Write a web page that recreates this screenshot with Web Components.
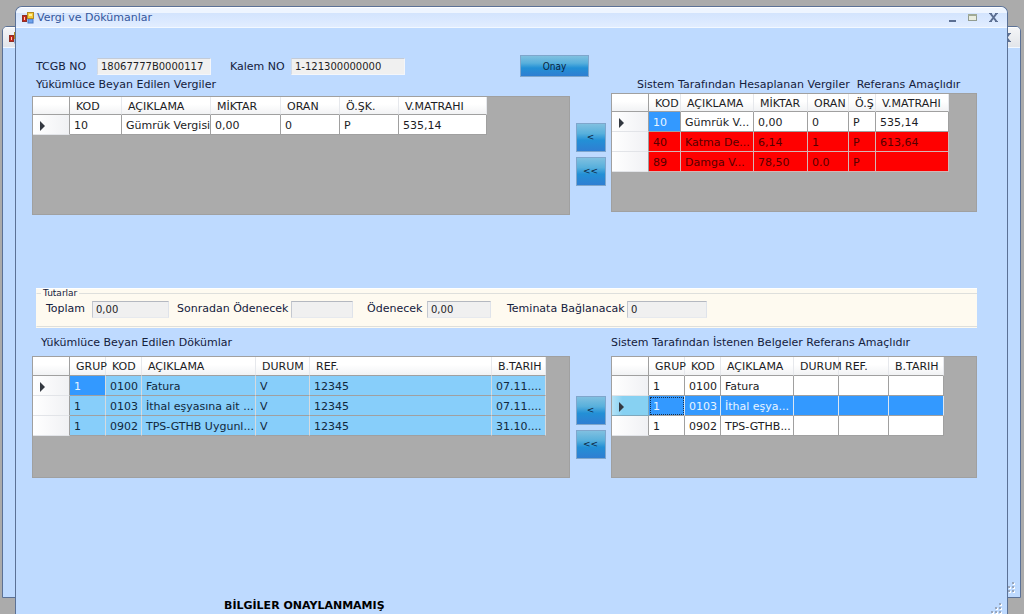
<!DOCTYPE html>
<html lang="tr">
<head>
<meta charset="utf-8">
<title>Vergi ve Dökümanlar</title>
<style>
  html, body { margin: 0; height: 100%; }
  body { background: #ababab; overflow: hidden; font: 11px/15px "DejaVu Sans", Verdana, sans-serif; color: #14203c; }
</style>
</head>
<body>
<tax-desktop></tax-desktop>

<template id="tpl-window">
  <style>
    :host { display: flex; flex-direction: column; box-sizing: border-box; border: 1px solid #5b7196; border-radius: 7px 7px 0 0; background: #bedaff; overflow: hidden; position: relative; }
    header { display: flex; align-items: center; height: 19px; padding: 0 8px 0 6px; border-top: 1px solid #fff; border-bottom: 1px solid #f2f8ff; background: linear-gradient(#eef5ff 0 25%, #d3e4fd 26%, #d9e8ff 60%, #e2edff); color: #35579c; }
    :host([inactive]) header { background: linear-gradient(#f4f5f7, #e2e5ea); }
    h1 { flex: 1; margin: 0 0 0 2px; font: inherit; }
    button { border: 0; padding: 0; margin: 0 0 0 10px; background: none; width: 11px; height: 11px; display: block; }
    svg { display: block; }
    .content { flex: 1; display: flex; flex-direction: column; }
    .grip { position: absolute; right: 4px; bottom: 0; }
    :host([inactive]) .grip { bottom: 4px; }
  </style>
  <header>
    <svg width="13" height="13" viewBox="0 0 13 13" aria-hidden="true">
      <rect x="6" y="8" width="5" height="4" fill="#6fa3ee" stroke="#4a78c4"/>
      <rect x=".5" y="4.500" width="4" height="6" fill="#c8281c" stroke="#8e3128"/>
      <rect x="2" y="6" width="1" height="3" fill="#ffc9b4"/>
      <rect x="5.500" y="1.500" width="6" height="6" fill="#f6cc3c" stroke="#b58b22"/>
      <rect x="7" y="3" width="3" height="2" fill="#fff0a0"/>
    </svg>
    <h1></h1>
    <button aria-label="Simge durumuna küçült"><svg width="11" height="11"><rect x="3" y="8" width="7" height="2" fill="#5c6f92"/></svg></button>
    <button aria-label="Ekranı kapla"><svg width="11" height="11"><rect x="1.500" y="2.500" width="8" height="6" fill="#e9eddf" stroke="#939c90"/><rect x="1" y="2" width="9" height="2" fill="#a0aa96"/></svg></button>
    <button aria-label="Kapat"><svg width="11" height="11"><path d="M2.500 1.500L8.500 9.500M8.500 1.500L2.500 9.500" fill="none" stroke="#5c6f92" stroke-width="2"/><path d="M1 1h3v1H1zM7 1h3v1H7zM1 9h3v1H1zM7 9h3v1H7z" fill="#5c6f92"/></svg></button>
  </header>
  <div class="content"><slot></slot></div>
  <svg class="grip" width="12" height="12" aria-hidden="true"><g fill="#fff"><path d="M9 2h2v2h-2zM9 6h2v2h-2zM5 6h2v2h-2zM9 10h2v2h-2zM5 10h2v2h-2zM1 10h2v2h-2z"/></g><g fill="#98a6bc"><path d="M8 1h2v2h-2zM8 5h2v2h-2zM4 5h2v2h-2zM8 9h2v2h-2zM4 9h2v2h-2zM0 9h2v2h-2z"/></g></svg>
</template>

<template id="tpl-desktop">
  <style>
    :host { display: block; position: relative; min-height: 100%; }
    .back { position: absolute; inset: 26px 3px 16px 2px; border-radius: 5px 5px 0 0; }
    .front { margin: 0 16px 0 15px; top: 6px; min-height: calc(100vh - 6px); border-bottom: 0; }
    .page { flex: 1; display: flex; flex-direction: column; padding: 27px 30px 0 16px; }
    .top { display: flex; align-items: center; padding-left: 4px; height: 22px; }
    .top blue-button { margin-left: 115px; }
    .top labeled-field + labeled-field { margin-left: 19px; }
    .pair { display: grid; grid-template-columns: minmax(0, 538fr) 41px minmax(0, 366fr); }
    .caption { margin: 0 0 4px 4px; font: inherit; white-space: pre; }
    .taxes .right .caption { margin: 0 0 1px 26px; }
    .docs .caption { margin: 0 0 6px 9px; }
    .docs .right .caption { margin-left: 0; }
    .move { display: flex; flex-direction: column; align-items: center; gap: 5px; padding-top: 46px; }
    .docs .move { padding-top: 61px; }
    .taxes data-grid { height: 119px; }
    .docs data-grid { height: 122px; }
    group-box { margin: 73px 0 7px 4px; }
    .status { margin: auto 0 1px 192px; font-weight: bold; color: #000; }
  </style>
  <app-window class="back" inactive></app-window>
  <app-window class="front" heading="Vergi ve Dökümanlar">
    <div class="page">
      <div class="top">
        <labeled-field label="TCGB NO" value="18067777B0000117" label-width="61" field-width="114" small></labeled-field>
        <labeled-field label="Kalem NO" value="1-121300000000" label-width="61" field-width="114" small></labeled-field>
        <blue-button wide>Onay</blue-button>
      </div>
      <section class="pair taxes">
        <div>
          <h2 class="caption">Yükümlüce Beyan Edilen Vergiler</h2>
          <data-grid source="declaredTaxes"></data-grid>
        </div>
        <div class="move"><blue-button>&lt;</blue-button><blue-button>&lt;&lt;</blue-button></div>
        <div class="right">
          <h2 class="caption">Sistem Tarafından Hesaplanan Vergiler  Referans Amaçlıdır</h2>
          <data-grid source="computedTaxes"></data-grid>
        </div>
      </section>
      <group-box legend="Tutarlar">
        <labeled-field label="Toplam" value="0,00" label-width="46" field-width="77"></labeled-field>
        <labeled-field label="Sonradan Ödenecek" value="" label-width="114" field-width="62"></labeled-field>
        <labeled-field label="Ödenecek" value="0,00" label-width="60" field-width="64"></labeled-field>
        <labeled-field label="Teminata Bağlanacak" value="0" label-width="120" field-width="80"></labeled-field>
      </group-box>
      <section class="pair docs">
        <div>
          <h2 class="caption">Yükümlüce Beyan Edilen Dökümlar</h2>
          <data-grid source="declaredDocs"></data-grid>
        </div>
        <div class="move"><blue-button>&lt;</blue-button><blue-button>&lt;&lt;</blue-button></div>
        <div class="right">
          <h2 class="caption">Sistem Tarafından İstenen Belgeler Referans Amaçlıdır</h2>
          <data-grid source="requestedDocs"></data-grid>
        </div>
      </section>
      <div class="status">BİLGİLER ONAYLANMAMIŞ</div>
    </div>
  </app-window>
</template>

<template id="tpl-field">
  <style>
    :host { display: flex; align-items: center; }
    label { flex: none; white-space: nowrap; }
    input { box-sizing: border-box; height: 17px; margin: 0; padding: 0 3px; border: 1px solid; border-color: #b4b8c0 #dfe3ea #e6e9ee #c4c8d0; background: #f0f0f0; font: 10px/15px "DejaVu Sans", Verdana, sans-serif; color: #1e1e24; outline: 0; }
    :host([small]) input { border-color: #c3cbd8 #f4f6fa #f4f6fa #d2dae6; }
    :host(:not([small])) input { margin-top: 2px; }
  </style>
  <label for="f"></label><input id="f" type="text" readonly>
</template>

<template id="tpl-button">
  <style>
    :host { display: block; }
    button { display: block; box-sizing: border-box; width: 30px; height: 29px; padding: 0; border: 1px solid #7fa6cc; background: linear-gradient(#80c0e0, #58b0dc 35%, #2390d6 60%, #2f7ed2); font: 9px/15px "DejaVu Sans", Verdana, sans-serif; color: #0c2440; }
    :host([wide]) button { width: 69px; height: 22px; font: 10px/15px "DejaVu Sans Condensed", "DejaVu Sans", sans-serif; }
  </style>
  <button type="button"><slot></slot></button>
</template>

<template id="tpl-group">
  <style>
    :host { display: block; background: #fefaf0; border-top: 1px solid #fff; padding-bottom: 1px; }
    fieldset { margin: 0; min-width: 0; padding: 1px 0 9px 9px; border: 1px solid #dedfdc; border-left-color: #fefaf0; border-right: 0; }
    legend { margin-left: -5px; padding: 0 2px; font-size: 9px; line-height: 9px; }
    .row { display: flex; gap: 14px; align-items: center; height: 18px; }
    ::slotted(:first-child) { margin-right: -6px; }
    ::slotted(:last-child) { margin-left: 2px; }
  </style>
  <fieldset><legend></legend><div class="row"><slot></slot></div></fieldset>
</template>

<template id="tpl-grid">
  <style>
    :host { display: block; box-sizing: border-box; border: 1px solid #a0a0a0; background: #ababab; overflow: hidden; }
    table { table-layout: fixed; border-collapse: separate; border-spacing: 0; }
    th, td { box-sizing: border-box; padding: 2px 0 0 4px; height: 20px; white-space: nowrap; text-align: left; font-weight: normal; color: #1c1c24; border: solid #a0a0a0; border-width: 0 1px 1px 0; line-height: 15px; }
    td { background: #fff; overflow: hidden; }
    thead tr { background: linear-gradient(#fff 0 40%, #f0f1f3); }
    thead th { height: 18px; padding: 1px 0 0 6px; border-right-color: #e6e8ec; }
    :host([source$="Docs"]) thead th { height: 19px; }
    thead th:first-child { border-right-color: #a0a0a0; }
    tbody th { background: linear-gradient(90deg, #fff, #f0f1f4); border-bottom-color: #e2e4e8; }
    th svg { display: block; margin-left: 3px; }
    tr.red td { background: #f00; color: #560000; border-color: #d5b4b4; }
    tr.blue td { background: #87cefa; color: #12283c; border-right-color: #d6dade; }
    tr.chosen td { background: #3399ff; color: #e8f4ff; border-right-color: #dbe6f2; }
    tr.chosen th { background: linear-gradient(90deg, #b4e2f6, #87d1f2 30%); border-color: #7fa8bc; }
    tr td.current { background: #3399ff; color: #e8f4ff; }
    tr.chosen td.current { outline: 1px dotted #14304c; outline-offset: -2px; }
  </style>
  <table><colgroup></colgroup><thead><tr></tr></thead><tbody></tbody></table>
</template>

<script>
const grids = {
  declaredTaxes: {
    columns: [['', 37], ['KOD', 52], ['AÇIKLAMA', 89], ['MİKTAR', 70], ['ORAN', 59], ['Ö.ŞK.', 59], ['V.MATRAHI', 88]],
    rows: [{ pointer: true, cells: ['10', 'Gümrük Vergisi', '0,00', '0', 'P', '535,14'] }]
  },
  computedTaxes: {
    columns: [['', 37], ['KOD', 32], ['AÇIKLAMA', 73], ['MİKTAR', 54], ['ORAN', 41], ['Ö.Ş', 27], ['V.MATRAHI', 73]],
    rows: [
      { pointer: true, current: true, cells: ['10', 'Gümrük V...', '0,00', '0', 'P', '535,14'] },
      { tone: 'red', cells: ['40', 'Katma De...', '6,14', '1', 'P', '613,64'] },
      { tone: 'red', cells: ['89', 'Damga V...', '78,50', '0.0', 'P', ''] }
    ]
  },
  declaredDocs: {
    columns: [['', 37], ['GRUP', 36], ['KOD', 36], ['AÇIKLAMA', 114], ['DURUM', 54], ['REF.', 182], ['B.TARIH', 54]],
    rows: [
      { tone: 'blue', pointer: true, current: true, cells: ['1', '0100', 'Fatura', 'V', '12345', '07.11....'] },
      { tone: 'blue', cells: ['1', '0103', 'İthal eşyasına ait ...', 'V', '12345', '07.11....'] },
      { tone: 'blue', cells: ['1', '0902', 'TPS-GTHB Uygunl...', 'V', '12345', '31.10....'] }
    ]
  },
  requestedDocs: {
    columns: [['', 37], ['GRUP', 36], ['KOD', 36], ['AÇIKLAMA', 73], ['DURUM', 45], ['REF.', 50], ['B.TARIH', 55]],
    rows: [
      { cells: ['1', '0100', 'Fatura', '', '', ''] },
      { tone: 'chosen', pointer: true, current: true, cells: ['1', '0103', 'İthal eşya...', '', '', ''] },
      { cells: ['1', '0902', 'TPS-GTHB...', '', '', ''] }
    ]
  }
};

class TemplateElement extends HTMLElement {
  constructor(id) {
    super();
    this.attachShadow({ mode: 'open' }).append(document.getElementById(id).content.cloneNode(true));
  }
  $(selector) { return this.shadowRoot.querySelector(selector); }
}

customElements.define('app-window', class extends TemplateElement {
  constructor() { super('tpl-window'); }
  connectedCallback() { this.$('h1').textContent = this.getAttribute('heading') || ''; }
});

customElements.define('labeled-field', class extends TemplateElement {
  constructor() { super('tpl-field'); }
  connectedCallback() {
    const label = this.$('label'), input = this.$('input');
    label.textContent = this.getAttribute('label');
    label.style.width = this.getAttribute('label-width') + 'px';
    input.value = this.getAttribute('value');
    input.style.width = this.getAttribute('field-width') + 'px';
  }
});

customElements.define('blue-button', class extends TemplateElement {
  constructor() { super('tpl-button'); }
});

customElements.define('group-box', class extends TemplateElement {
  constructor() { super('tpl-group'); }
  connectedCallback() { this.$('legend').textContent = this.getAttribute('legend'); }
});

customElements.define('data-grid', class extends TemplateElement {
  constructor() { super('tpl-grid'); }
  connectedCallback() {
    const { columns, rows } = grids[this.getAttribute('source')];
    this.$('table').style.width = columns.reduce((sum, c) => sum + c[1], 0) + 'px';
    this.$('colgroup').innerHTML = columns.map(c => `<col style="width:${c[1]}px">`).join('');
    this.$('thead tr').innerHTML = columns.map(c => `<th scope="col">${c[0]}</th>`).join('');
    const arrow = '<svg width="6" height="10" aria-hidden="true"><path d="M0 0l5 5-5 5z" fill="#333840"/></svg>';
    this.$('tbody').innerHTML = rows.map(r =>
      `<tr class="${r.tone || ''}"><th scope="row">${r.pointer ? arrow : ''}</th>` +
      r.cells.map((c, i) => `<td${r.current && i === 0 ? ' class="current"' : ''}>${c}</td>`).join('') + '</tr>').join('');
  }
});

customElements.define('tax-desktop', class extends TemplateElement {
  constructor() { super('tpl-desktop'); }
});
</script>
</body>
</html>
